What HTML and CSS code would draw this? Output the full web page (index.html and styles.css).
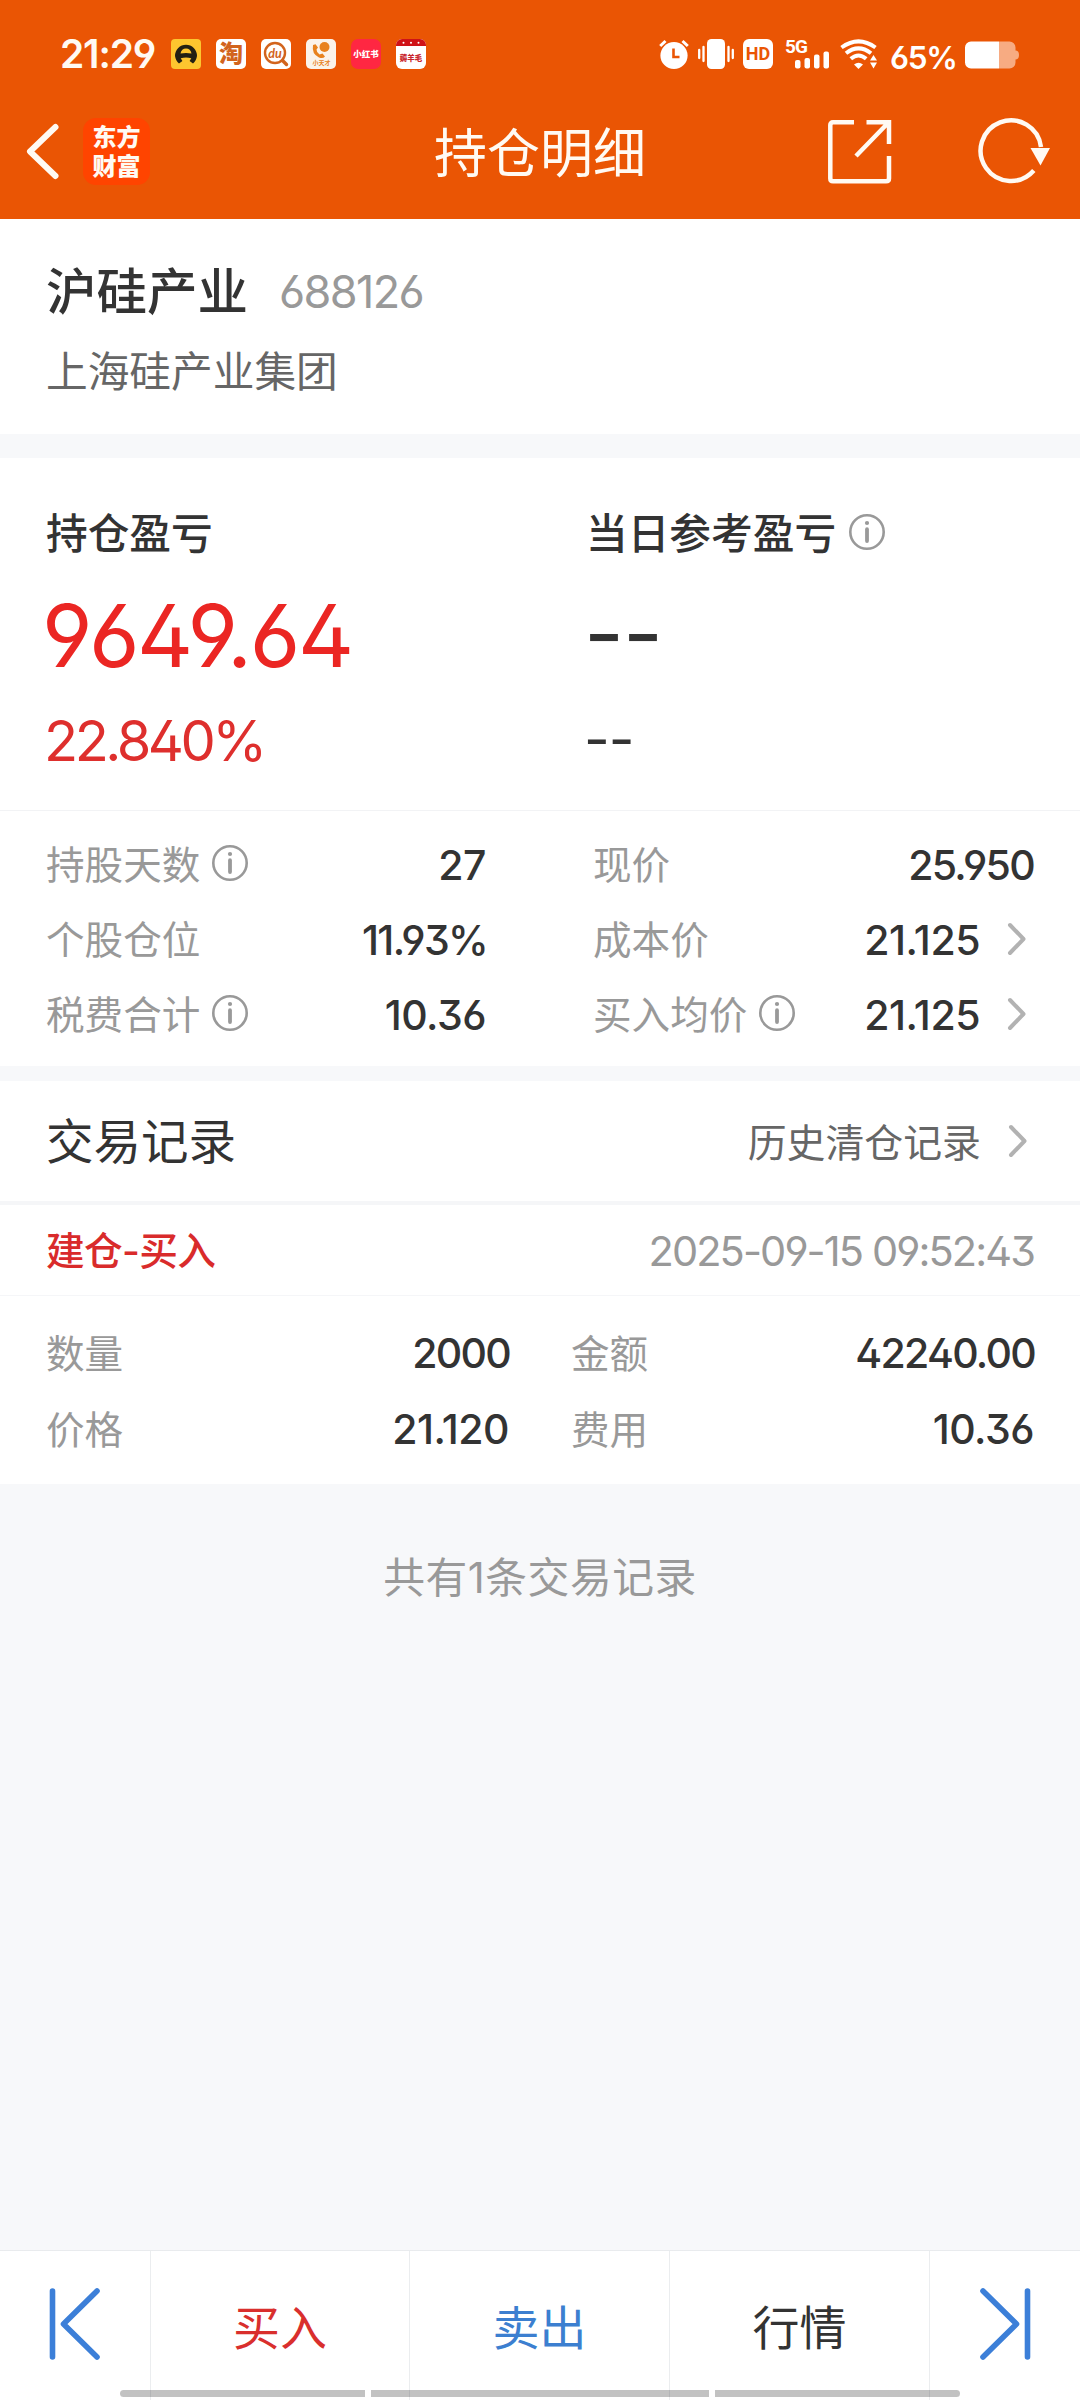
FILE: index.html
```html
<!DOCTYPE html>
<html lang="zh-CN">
<head>
<meta charset="utf-8">
<title>持仓明细</title>
<link rel="stylesheet" href="styles.css">
</head>
<body>
<svg class="defs" width="0" height="0">
  <symbol id="info" viewBox="0 0 36 36"><circle cx="18" cy="18" r="16.7" fill="none" stroke="#999" stroke-width="2.6"/><circle cx="18" cy="9" r="2.1" fill="#999"/><path d="M18 15.2V27" stroke="#999" stroke-width="3.8" stroke-linecap="round"/></symbol>
  <symbol id="chev" viewBox="0 0 20 34"><path d="M3 3L16.5 17L3 31" fill="none" stroke="#b2b2b2" stroke-width="4" stroke-linecap="round" stroke-linejoin="round"/></symbol>
</svg>
<div class="screen">
  <header class="top">
    <div class="status">
      <span class="time">21:29</span>
      <div class="apps">
        <svg class="app" viewBox="0 0 30 30"><rect width="30" height="30" rx="4" fill="#fdc62f"/><path d="M4 17A11 11.300 0 0 1 26 17C25.500 20 24.200 22.500 22 24.500L18.600 22L20.300 19.200Q15 17.800 9.700 19.200L11.400 22L8 24.500C5.800 22.500 4.500 20 4 17Z" fill="#222013"/><path d="M9.500 14.600Q10.500 9.500 15 9.500T20.500 14.600Q15 13.500 9.500 14.600Z" fill="#fdc62f"/></svg>
        <span class="app app-tao">淘</span>
        <svg class="app" viewBox="0 0 30 30"><rect width="30" height="30" rx="5" fill="#fff"/><circle cx="14" cy="14" r="10" fill="none" stroke="#d2641d" stroke-width="2.400"/><path d="M21.500 21.500L25.500 25.500" stroke="#d2641d" stroke-width="3.400" stroke-linecap="round"/><text x="14" y="18.500" text-anchor="middle" class="du">du</text></svg>
        <svg class="app" viewBox="0 0 30 30"><rect width="30" height="30" rx="5" fill="#fbf3ea"/><circle cx="18.500" cy="8" r="5" fill="#e8821e"/><path d="M7 6Q5.500 15 13 18.500Q17 20 19 17.500L16.500 14.500L13.500 15.500Q10.500 13.500 10.500 10.500L12 8.500L9.500 5.200Z" fill="#e8821e"/><text x="15.500" y="25.800" text-anchor="middle" class="tiny-o">小天才</text></svg>
        <span class="app app-red">小红书</span>
        <svg class="app" viewBox="0 0 30 30"><rect width="30" height="30" rx="6" fill="#fff"/><path d="M0 7V6A6 6 0 0 1 6 0H24A6 6 0 0 1 30 6V7Z" fill="#cf1217"/><g fill="#fff"><circle cx="7.500" cy="3.700" r="1"/><circle cx="15" cy="3.700" r="1"/><circle cx="22.500" cy="3.700" r="1"/></g><text x="15" y="22" text-anchor="middle" class="tiny-r">薅羊毛</text></svg>
      </div>
      <div class="sys">
        <svg width="30" height="30" viewBox="0 0 30 30"><circle cx="15" cy="16.500" r="13.600" fill="#fff"/><path d="M1.200 7L6.500 2M28.800 7L23.500 2" stroke="#fff" stroke-width="3"/><path d="M14.500 9.500V18H20.500" fill="none" stroke="#ea5504" stroke-width="2.600"/></svg>
        <svg width="36" height="30" viewBox="0 0 36 30"><rect x="9" width="18" height="30" rx="4.500" fill="#fff"/><path d="M1.200 11V19M5.500 8V22M30.500 8V22M34.800 11V19" stroke="#fff" stroke-width="2.300" stroke-linecap="round"/></svg>
        <span class="hd">HD</span>
        <svg class="net" width="46" height="31" viewBox="0 0 46 31"><text x="0" y="15" class="g5">5G</text><g fill="#fff"><rect x="10" y="22" width="5.500" height="8.500" rx="2"/><rect x="19.500" y="20" width="5.500" height="10.500" rx="2"/><rect x="29" y="16.500" width="5.500" height="14" rx="2"/><rect x="38.500" y="13.500" width="5.500" height="17" rx="2"/></g></svg>
        <svg class="wifi" width="38" height="30" viewBox="0 0 38 30"><g fill="none" stroke="#fff" stroke-width="4"><path d="M1.500 8.500Q18.500 -3.800 35.500 8.500"/><path d="M6 14.300Q18.500 4.500 31 14.300"/><path d="M10.800 19.800Q18.500 13.200 26.200 19.800"/></g><path d="M14 25.500Q18.500 21.800 23 25.500L18.500 30Z" fill="#fff"/><path d="M30 21.500L33.500 16L37 21.500ZM30 23.500H37L33.500 29.500Z" fill="#fff"/></svg>
        <span class="pct">65%</span>
        <svg width="55" height="28" viewBox="0 0 55 28"><path d="M34 .500H44.500A6 6 0 0 1 50.500 6.500V9.500Q54 9.500 54 14Q54 18.500 50.500 18.500V21.500A6 6 0 0 1 44.500 27.500H34Z" fill="#f7ab82"/><path d="M34 .500V27.500H6A6 6 0 0 1 0 21.500V6.500A6 6 0 0 1 6 .500Z" fill="#fff"/></svg>
      </div>
    </div>
    <div class="nav">
      <svg class="back" width="34" height="60" viewBox="0 0 34 60"><path d="M29.500 6L4 30.500L29.500 55" fill="none" stroke="#fffaf3" stroke-width="6" stroke-linecap="round" stroke-linejoin="round"/></svg>
      <div class="logo"><span>东方</span><span>财富</span></div>
      <h1>持仓明细</h1>
      <svg class="share" width="64" height="64" viewBox="0 0 64 64"><g fill="none" stroke="#fffaf3" stroke-width="4.500"><path d="M26 2.300H5Q2.300 2.300 2.300 5V58.500Q2.300 61.200 5 61.200H58Q61 61.200 61 58.500V36"/><path d="M38.500 2.300H61V24M60 3L28 36"/></g></svg>
      <svg class="refresh" width="72" height="66" viewBox="0 0 72 66"><path d="M54.800 52.500A30.300 30.300 0 1 1 62 29" fill="none" stroke="#fffaf3" stroke-width="4.500"/><path d="M51.500 30H71L61.500 47.500Z" fill="#fffaf3"/></svg>
    </div>
  </header>

  <section class="stock">
    <div class="stock-head"><strong>沪硅产业</strong><span class="code">688126</span></div>
    <p class="company">上海硅产业集团</p>
  </section>

  <section class="profit">
    <div class="col">
      <div class="cap">持仓盈亏</div>
      <div class="big">9649.64</div>
      <div class="mid">22.840%</div>
    </div>
    <div class="col">
      <div class="cap">当日参考盈亏<svg class="i" width="36" height="36"><use href="#info"/></svg></div>
      <div class="big dash">--</div>
      <div class="mid dash">--</div>
    </div>
  </section>

  <section class="facts">
    <div class="row"><span class="l">持股天数<svg class="i" width="36" height="36"><use href="#info"/></svg></span><b>27</b></div>
    <div class="row"><span class="l">现价</span><b class="tight">25.950</b></div>
    <div class="row"><span class="l">个股仓位</span><b class="tight">11.93%</b></div>
    <div class="row"><span class="l">成本价</span><b>21.125</b><svg class="c" width="20" height="34"><use href="#chev"/></svg></div>
    <div class="row"><span class="l">税费合计<svg class="i" width="36" height="36"><use href="#info"/></svg></span><b>10.36</b></div>
    <div class="row"><span class="l">买入均价<svg class="i" width="36" height="36"><use href="#info"/></svg></span><b>21.125</b><svg class="c" width="20" height="34"><use href="#chev"/></svg></div>
  </section>

  <section class="records">
    <div class="rec-head"><h2>交易记录</h2><span class="hist">历史清仓记录</span><svg class="c" width="20" height="34"><use href="#chev"/></svg></div>
    <div class="rec-title"><span class="buy">建仓-买入</span><time>2025-09-15 09:52:43</time></div>
    <div class="rec-body">
      <div class="row"><span class="l">数量</span><b class="tight">2000</b></div>
      <div class="row"><span class="l">金额</span><b class="tight">42240.00</b></div>
      <div class="row"><span class="l">价格</span><b>21.120</b></div>
      <div class="row"><span class="l">费用</span><b>10.36</b></div>
    </div>
  </section>
  <p class="total">共有1条交易记录</p>

  <footer class="tabs">
    <div class="tab edge"><svg width="52" height="74" viewBox="0 0 52 74"><path d="M3.500 4V70M48 4L14.500 37L48 70" fill="none" stroke="#3c7fd8" stroke-width="5.600" stroke-linecap="round" stroke-linejoin="round"/></svg></div>
    <div class="tab red">买入</div>
    <div class="tab blue">卖出</div>
    <div class="tab">行情</div>
    <div class="tab edge"><svg width="52" height="74" viewBox="0 0 52 74"><path d="M48.500 4V70M4 4L37.500 37L4 70" fill="none" stroke="#3c7fd8" stroke-width="5.600" stroke-linecap="round" stroke-linejoin="round"/></svg></div>
    <div class="gesture"><i></i><i></i><i></i></div>
  </footer>
</div>
</body>
</html>
```
FILE: styles.css
```css
* { box-sizing: border-box; margin: 0; padding: 0; }
body { background: #f7f8fa; font-family: Inter, "Noto Sans CJK SC", sans-serif; font-feature-settings: "ss01"; line-height: 1.4; color: #333; }
svg { display: block; flex: none; overflow: visible; }
.defs { position: absolute; }
.screen { width: 1080px; height: 2400px; display: flex; flex-direction: column; overflow: hidden; white-space: nowrap; }

.top { height: 219px; background: #ea5504; color: #fffaf3; }
.status { height: 88px; padding: 39px 60px 0 60px; display: flex; align-items: flex-start; }
.time { width: 111px; font-size: 39px; line-height: 30px; font-weight: 600; letter-spacing: -1.2px; }
.apps { display: flex; gap: 15px; }
.app { width: 30px; height: 30px; border-radius: 5px; text-align: center; }
.app-tao { background: #fff; color: #d2641d; font-size: 24px; line-height: 30px; font-weight: 900; }
.app-red { background: #ff2742; color: #fff; font-size: 8.5px; line-height: 30px; font-weight: 900; border-radius: 7px; }
.du { font: italic 700 12.5px Lato, sans-serif; fill: #d2641d; }
.tiny-o { font: 700 6px "Noto Sans CJK SC", sans-serif; fill: #e8821e; }
.tiny-r { font: 900 7.5px "Noto Sans CJK SC", sans-serif; fill: #c9252c; }
.sys { margin-left: auto; height: 30px; display: flex; align-items: flex-end; color: #fff; }
.sys > * + * { margin-left: 9px; }
.hd { width: 30px; height: 30px; border-radius: 6px; background: #fff; color: #ea5504; font: 700 18px/30px Roboto, sans-serif; text-align: center; }
.sys .net { margin-left: 12px; }
.g5 { font: 700 19px Roboto, sans-serif; fill: #fff; letter-spacing: -1px; }
.sys .pct { margin-left: 12px; width: 66px; font-size: 31.5px; line-height: 22px; font-weight: 600; letter-spacing: -1.3px; }

.nav { height: 131px; padding: 30px 29px 0 26px; display: flex; align-items: flex-start; }
.back { margin-top: 3px; }
.logo { margin-left: 23px; width: 67px; height: 67px; border-radius: 13px; background: #ff4400; display: flex; flex-direction: column; align-items: center; justify-content: center; font-size: 24px; line-height: 29px; font-weight: 900; }
h1 { margin-top: 1px; margin-left: 284px; width: 220px; font-size: 53px; line-height: 70px; font-weight: 400; }
.share { margin-left: 174px; margin-top: 2px; }
.refresh { margin-left: auto; }

.stock { height: 215px; background: #fff; padding: 40px 46px 0; }
.stock-head { height: 66px; display: flex; align-items: center; }
strong { font-size: 50.5px; font-weight: 500; line-height: 66px; }
.code { margin-top: -2px; margin-left: 31px; font-size: 45px; color: #999; letter-spacing: -1.6px; }
.company { margin-top: 17px; font-size: 41.7px; line-height: 60px; color: #666; }

.profit { margin-top: 24px; height: 352px; background: #fff; display: grid; grid-template-columns: 540px 540px; }
.col { padding: 46px 0 0 46px; }
.cap { display: flex; align-items: center; height: 60px; font-size: 41.7px; line-height: 60px; font-weight: 500; }
.i { margin-left: 13px; margin-top: -5px; }
.big { height: 116px; margin-top: 14px; line-height: 116px; font-size: 87px; color: #eb2623; letter-spacing: -2.4px; margin-left: -4px; }
.mid { height: 70px; margin-top: 12px; line-height: 70px; font-size: 56px; color: #de2f2d; letter-spacing: -3.5px; margin-left: -2px; }
.big.dash { color: #333; letter-spacing: -1px; padding-left: 2px; line-height: 112px; }
.mid.dash { color: #333; letter-spacing: -1px; line-height: 67px; }

.facts { height: 256px; background: #fff; border-top: 1px solid #f2f3f5; padding: 17px 46px 0; display: grid; grid-template-columns: 440px 440px; column-gap: 107px; grid-auto-rows: 75px; }
.row { display: flex; align-items: center; font-size: 38.6px; }
.row .i { margin-left: 12px; }
.l { display: flex; align-items: center; color: #999; }
.row b { margin-left: auto; font-size: 41px; font-weight: 500; letter-spacing: -.5px; }
.row .tight { letter-spacing: -1.7px; margin-right: -1px; }
.c { margin-left: 27px; margin-right: 6px; margin-top: -4px; }

.records { margin-top: 15px; background: #fff; height: 403px; }
.rec-head { height: 124px; padding: 3px 46px 0; border-bottom: 4px solid #f5f6f8; display: flex; align-items: center; }
h2 { font-size: 47.5px; font-weight: 400; }
.hist { margin-left: auto; margin-top: 2px; font-size: 38.9px; color: #666; }
.rec-title { height: 91px; padding: 2px 46px 0; border-bottom: 1px solid #f5f6f8; display: flex; align-items: center; justify-content: space-between; font-size: 38.7px; }
.buy { color: #d92b2b; font-weight: 500; letter-spacing: -.7px; }
time { font-size: 41.5px; color: #999; letter-spacing: -1.9px; }
.rec-body { padding: 20px 46px 0; display: grid; grid-template-columns: 463px 463px; column-gap: 62px; grid-auto-rows: 76px; }
.total { margin-top: 64px; text-align: center; font-size: 41.8px; line-height: 60px; color: #999; letter-spacing: .5px; }

.tabs { margin-top: auto; position: relative; height: 150px; background: #fff; border-top: 1px solid #e9ebee; display: grid; grid-template-columns: 151px 259px 260px 260px 150px; }
.tab { display: flex; align-items: center; justify-content: center; padding-top: 4px; font-size: 47px; border-right: 1px solid #ebedef; }
.tab:nth-child(5) { border-right: 0; }
.edge { padding: 0 0 4px; }
.red { color: #d92f2d; }
.blue { color: #3c7fd0; }
.gesture { position: absolute; left: 120px; right: 120px; bottom: 3px; height: 7px; display: grid; grid-template-columns: 245px 338px 245px; gap: 6px; }
.gesture i { background: rgba(0, 0, 0, .24); }
.gesture i:first-child { border-radius: 4px 0 0 4px; }
.gesture i:last-child { border-radius: 0 4px 4px 0; }
```
